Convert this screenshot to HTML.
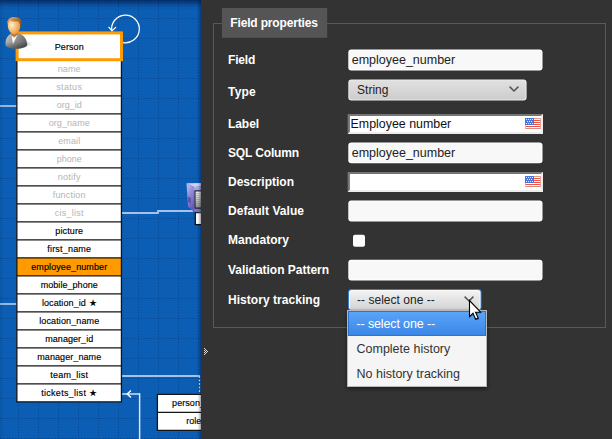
<!DOCTYPE html>
<html>
<head>
<meta charset="utf-8">
<style>
*{box-sizing:border-box;}
html,body{margin:0;padding:0;}
body{width:612px;height:439px;overflow:hidden;background:#333;font-family:"Liberation Sans",sans-serif;position:relative;}
#canvas{position:absolute;left:0;top:0;width:201px;height:439px;overflow:hidden;background-color:#0a60b6;}
#grid{position:absolute;left:0;top:0;}
#shade{position:absolute;left:0;top:0;width:201px;height:439px;box-shadow:inset 0 6px 6px -3px rgba(0,0,30,0.6), inset -3px 0 3px -2px rgba(0,0,30,0.4);}
.cls{position:absolute;left:16px;width:106px;}
.row{position:absolute;left:16.5px;width:105.5px;height:19px;border:1px solid transparent;color:#000;-webkit-text-stroke:0.15px #000;font-size:9px;text-align:center;line-height:17px;white-space:nowrap;}
.row.g{color:#b4b4b4;-webkit-text-stroke:0;}
.row.hl{}
#hdr{position:absolute;left:15.5px;top:31.5px;width:107.5px;height:29.5px;border:3px solid transparent;font-size:9px;text-align:center;line-height:24px;color:#000;-webkit-text-stroke:0.15px #000;}
#panel{position:absolute;left:201px;top:0;width:411px;height:439px;background:#333;}
#lg{position:absolute;left:222px;top:8px;width:105px;height:30px;color:#fff;font-weight:bold;font-size:12px;line-height:30px;padding-left:8.3px;letter-spacing:-0.16px;white-space:nowrap;}
.lb{position:absolute;left:228px;color:#fff;font-weight:bold;font-size:12px;white-space:nowrap;line-height:14px;}
.in{position:absolute;left:348px;width:194.5px;height:21px;font-size:12.5px;color:#222;line-height:21px;padding-left:3.7px;white-space:nowrap;}
.in2{position:absolute;left:348px;width:195px;height:20px;font-size:12.4px;color:#111;line-height:21px;padding-left:2.6px;white-space:nowrap;}
.flag{position:absolute;left:525px;}
.chev{position:absolute;}
#dd{position:absolute;left:347px;top:310px;width:140px;height:77px;background:#f5f5f5;border:1px solid #b8b8b8;box-shadow:0 2px 4px rgba(0,0,0,0.45);}
.it{position:absolute;left:0;width:138px;height:25px;font-size:12.5px;color:#333;line-height:25px;padding-left:8.5px;white-space:nowrap;}
.it.on{color:#fff;}
#hi{position:absolute;left:0;top:0;width:138px;height:25px;background:linear-gradient(#5aa6f9,#3b85e6);box-shadow:inset 0 0 0 1px #2e72cc;}
.sel{position:absolute;left:348px;height:21px;font-size:12px;color:#222;line-height:21px;padding-left:9px;letter-spacing:0.03px;white-space:nowrap;}
</style>
</head>
<body>
<div id="canvas">
<svg id="grid" width="201" height="439">
<defs>
<pattern id="fine" width="2" height="2" patternUnits="userSpaceOnUse"><rect x="0" y="0" width="2" height="1" fill="#09529f" opacity="0.2"/></pattern>
</defs>
<rect width="201" height="439" fill="url(#fine)"/>
<g stroke="#063f86" stroke-width="1" stroke-dasharray="1.7 1.3" fill="none" opacity="0.5">
<path d="M18.5 0V439M38.5 0V439M58.5 0V439M78.5 0V439M98.5 0V439M118.5 0V439M138.5 0V439M158.5 0V439M178.5 0V439M198.5 0V439"/>
<path d="M0 18.5H201M0 38.5H201M0 58.5H201M0 78.5H201M0 98.5H201M0 118.5H201M0 138.5H201M0 158.5H201M0 178.5H201M0 198.5H201M0 218.5H201M0 238.5H201M0 258.5H201M0 278.5H201M0 298.5H201M0 318.5H201M0 338.5H201M0 358.5H201M0 378.5H201M0 398.5H201M0 418.5H201M0 438.5H201"/>
</g>
<!-- connectors -->
<g fill="none" stroke="#a3c3ec" stroke-width="1.8">
<path d="M0 106H17"/>
<path d="M0 304H17"/>
<path d="M122 213H158V211H193"/>
<path d="M122 376H200"/>
<path d="M122 394H140" stroke-width="1.9"/>
</g>
<g fill="none" stroke="#dbe8f8" stroke-width="1.3">
<path d="M199.5 376V395" stroke-dasharray="2 1.5"/>
<path d="M139.6 393.2V439" stroke-width="1.5"/>
<path d="M131 390.6L127.2 394L131 397.4" stroke="#fff" stroke-width="1.4"/>
<path d="M123 42.56A13.85 13.85 0 1 0 111.8 31.2" stroke="#fff" stroke-width="1.25"/>
<path d="M108.6 26.9L112 30.8L116 27.1" stroke="#fff" stroke-width="1.25"/>
</g>
<g>
<rect x="16.85" y="59.80" width="104.60" height="342.00" fill="#fff"/>
<rect x="16.85" y="257.80" width="104.60" height="18" fill="#ff9a00"/>
<path d="M16.25 77.80H122.05M16.25 95.80H122.05M16.25 113.80H122.05M16.25 131.80H122.05M16.25 149.80H122.05M16.25 167.80H122.05M16.25 185.80H122.05M16.25 203.80H122.05M16.25 221.80H122.05M16.25 239.80H122.05M16.25 257.80H122.05M16.25 275.80H122.05M16.25 293.80H122.05M16.25 311.80H122.05M16.25 329.80H122.05M16.25 347.80H122.05M16.25 365.80H122.05M16.25 383.80H122.05M16.25 401.80H122.05M16.85 59.80V402.40M121.45 59.80V402.40" stroke="#151515" stroke-width="1.3" fill="none"/>
<rect x="17.1" y="32.9" width="104.4" height="26.8" fill="#fff" stroke="#ff9a00" stroke-width="3"/>
<rect x="157.40" y="394.30" width="60" height="36" fill="#fff"/>
<path d="M156.80 394.30H220M156.80 412.30H220M156.80 430.30H220M157.40 394.30V430.90" stroke="#151515" stroke-width="1.3" fill="none"/>
</g>
<g>
<defs>
<linearGradient id="pl" x1="0" y1="0" x2="0.4" y2="1"><stop offset="0" stop-color="#c6c2f2"/><stop offset="0.5" stop-color="#8f89da"/><stop offset="1" stop-color="#635cbc"/></linearGradient>
<linearGradient id="pf" x1="0" y1="0" x2="0" y2="1"><stop offset="0" stop-color="#b0abe8"/><stop offset="1" stop-color="#746dcc"/></linearGradient>
<linearGradient id="pt" x1="0" y1="0" x2="1" y2="1"><stop offset="0" stop-color="#cfccf4"/><stop offset="1" stop-color="#a7a2e4"/></linearGradient>
<linearGradient id="scr" x1="0" y1="0" x2="0" y2="1"><stop offset="0" stop-color="#f2f2f2"/><stop offset="0.5" stop-color="#c8c8c8"/><stop offset="1" stop-color="#8a8a8a"/></linearGradient>
</defs>
<rect x="195.3" y="212.6" width="8" height="12" fill="#fff" stroke="#111" stroke-width="1.3"/>
<path d="M186.5 183.2L201.5 183V186.6L194 186.9Z" fill="#d3d0f6"/>
<path d="M186.5 183.2L194 186.9V211.9L188 206.3Z" fill="url(#pl)"/>
<path d="M194 186.9L201.5 186.6V212.5L194 211.9Z" fill="url(#pf)"/>
<path d="M188.2 196.4L190.8 197.9V203.6L188.2 202Z" fill="#5650a8"/>
<rect x="195" y="190.9" width="7" height="17.2" fill="url(#scr)" stroke="#1a1a1a" stroke-width="1.1"/>
<path d="M195.6 193.5H201M195.6 195.5H201M195.6 197.5H201M195.6 199.5H201M195.6 201.5H201M195.6 203.5H201" stroke="#8a8a8a" stroke-width="0.6" opacity="0.7"/>
<rect x="199.6" y="210.4" width="1.4" height="1.6" fill="#2ecc40"/>
</g>
</svg>
<div class="row g" style="top:59.5px;letter-spacing:0.125px">name</div>
<div class="row g" style="top:77.5px;letter-spacing:0.333px">status</div>
<div class="row g" style="top:95.5px;letter-spacing:0.000px">org_id</div>
<div class="row g" style="top:113.5px;letter-spacing:0.062px">org_name</div>
<div class="row g" style="top:131.5px;letter-spacing:0.100px">email</div>
<div class="row g" style="top:149.5px;letter-spacing:0.000px">phone</div>
<div class="row g" style="top:167.5px;letter-spacing:0.250px">notify</div>
<div class="row g" style="top:185.5px;letter-spacing:0.188px">function</div>
<div class="row g" style="top:203.5px;letter-spacing:0.250px">cis_list</div>
<div class="row " style="top:221.5px;letter-spacing:0.143px">picture</div>
<div class="row " style="top:239.5px;letter-spacing:0.200px">first_name</div>
<div class="row hl" style="top:257.5px;letter-spacing:0.100px">employee_number</div>
<div class="row " style="top:275.5px;letter-spacing:0.042px">mobile_phone</div>
<div class="row " style="top:293.5px;letter-spacing:0.091px">location_id ★</div>
<div class="row " style="top:311.5px;letter-spacing:0.115px">location_name</div>
<div class="row " style="top:329.5px;letter-spacing:0.050px">manager_id</div>
<div class="row " style="top:347.5px;letter-spacing:0.083px">manager_name</div>
<div class="row " style="top:365.5px;letter-spacing:0.222px">team_list</div>
<div class="row " style="top:383.5px;letter-spacing:0.292px">tickets_list ★</div>
<div id="hdr" style="letter-spacing:0.08px">Person</div>
<div class="row" style="left:157px;top:393.5px;width:60px;text-align:left;padding-left:14.1px;letter-spacing:0.056px">person_id</div>
<div class="row" style="left:157px;top:411.5px;width:60px;text-align:left;padding-left:28.3px;letter-spacing:0.000px">role_id</div>
<svg id="pic" style="position:absolute;left:0;top:12px" width="36" height="42" viewBox="0 12 36 42">
<defs>
<linearGradient id="bd" x1="0" y1="0.2" x2="1" y2="0.7"><stop offset="0" stop-color="#c8c8c8"/><stop offset="0.4" stop-color="#9a9a9a"/><stop offset="1" stop-color="#585858"/></linearGradient>
<linearGradient id="bd2" x1="0" y1="0" x2="0" y2="1"><stop offset="0.55" stop-color="#000" stop-opacity="0"/><stop offset="1" stop-color="#000" stop-opacity="0.32"/></linearGradient>
<radialGradient id="fc" cx="0.32" cy="0.42" r="0.8"><stop offset="0" stop-color="#fff0d2"/><stop offset="0.35" stop-color="#f8c888"/><stop offset="0.75" stop-color="#e79f50"/><stop offset="1" stop-color="#c97a2c"/></radialGradient>
<linearGradient id="hr" x1="0" y1="0.2" x2="1" y2="0.8"><stop offset="0" stop-color="#e2b47a"/><stop offset="0.45" stop-color="#b97c3c"/><stop offset="1" stop-color="#7a481c"/></linearGradient>
<radialGradient id="sh" cx="0.5" cy="0.5" r="0.5"><stop offset="0" stop-color="#000" stop-opacity="0.22"/><stop offset="1" stop-color="#000" stop-opacity="0"/></radialGradient>
</defs>
<ellipse cx="24.5" cy="44" rx="8.5" ry="3.6" fill="url(#sh)"/>
<path d="M5.5 44.6C5.2 39.5 7.4 35.2 11.6 33.2L18.2 33C23.4 34.6 26.8 38.6 27.2 44.6C27.2 47.2 22 48.8 16.2 48.8C10.4 48.8 5.7 47.2 5.5 44.6Z" fill="url(#bd)"/>
<path d="M5.5 44.6C5.2 39.5 7.4 35.2 11.6 33.2L18.2 33C23.4 34.6 26.8 38.6 27.2 44.6C27.2 47.2 22 48.8 16.2 48.8C10.4 48.8 5.7 47.2 5.5 44.6Z" fill="url(#bd2)"/>
<path d="M11.6 35.2L17.6 34.8L12.9 44Z" fill="#fbfbfb"/>
<path d="M10.9 31L17.6 31L17.9 34.4L14.2 37.4L11 35Z" fill="#c77a30"/>
<path d="M7.8 25.5C7.6 21 10 18.4 14.2 18.4C18.4 18.4 20.6 21.2 20.4 25.8C20.2 30.4 17.6 34.2 14.4 34.2C11.2 34.2 8 30.4 7.8 25.5Z" fill="url(#fc)"/>
<path d="M7.3 24.2C6.8 19.6 10 16.9 14.6 17C19.6 17.1 22.3 19.8 21.6 24.4C21.4 26 21 27.2 20.4 28C20.4 25 19.8 22.8 18.2 21.2C15.4 21.8 11.2 21 9.2 20.4C8.2 21.6 7.8 23 7.3 24.2Z" fill="url(#hr)"/>
</svg>
<div id="shade"></div>
</div>

<div id="panel"></div>
<svg id="boxes" style="position:absolute;left:0;top:0" width="612" height="439">
<defs>
<linearGradient id="sg" x1="0" y1="0" x2="0" y2="1"><stop offset="0" stop-color="#e0e0e0"/><stop offset="1" stop-color="#cdcdcd"/></linearGradient>
<linearGradient id="sg2" x1="0" y1="0" x2="0" y2="1"><stop offset="0" stop-color="#f2f2f2"/><stop offset="1" stop-color="#d3d3d3"/></linearGradient>
</defs>
<rect x="213.5" y="23.5" width="392" height="304" fill="none" stroke="#595959" stroke-width="1"/>
<rect x="221.9" y="7.9" width="105.3" height="29.9" fill="#555"/>
<rect x="348.3" y="49.60" width="194.2" height="20.90" rx="3" fill="#fff"/><rect x="349.3" y="50.60" width="192.2" height="18.90" rx="2.2" fill="#f8f8f8"/>
<rect x="348.3" y="79.6" width="178.3" height="20.9" rx="3.2" fill="#ececec"/>
<rect x="349.3" y="80.6" width="176.3" height="18.9" rx="2.4" fill="url(#sg)"/>
<rect x="347.90" y="114.10" width="195.10" height="19.90" fill="#fff"/><path d="M347.90 114.10H543.00L541.00 116.10H349.90V132.00L347.90 134.00Z" fill="#757575"/><path d="M543.00 114.10V134.00H347.90L349.90 132.00H541.00V116.10Z" fill="#ececec"/><rect x="348.3" y="142.40" width="194.2" height="20.90" rx="3" fill="#fff"/><rect x="349.3" y="143.40" width="192.2" height="18.90" rx="2.2" fill="#f8f8f8"/><rect x="347.90" y="172.00" width="195.10" height="19.90" fill="#fff"/><path d="M347.90 172.00H543.00L541.00 174.00H349.90V189.90L347.90 191.90Z" fill="#757575"/><path d="M543.00 172.00V191.90H347.90L349.90 189.90H541.00V174.00Z" fill="#ececec"/><rect x="348.3" y="200.60" width="194.2" height="21.00" rx="3" fill="#fff"/><rect x="349.3" y="201.60" width="192.2" height="19.00" rx="2.2" fill="#f8f8f8"/>
<rect x="353" y="234.8" width="12" height="12" rx="2" fill="#fdfdfd"/>
<rect x="348.3" y="259.70" width="194.2" height="20.70" rx="3" fill="#fff"/><rect x="349.3" y="260.70" width="192.2" height="18.70" rx="2.2" fill="#f8f8f8"/>
<rect x="348" y="289" width="133.6" height="21.6" rx="3.4" fill="#2f7fd9"/>
<rect x="349" y="290" width="131.6" height="19.6" rx="2.6" fill="#fafafa"/>
<rect x="350" y="291" width="129.6" height="18.6" rx="2" fill="url(#sg2)"/>
</svg>
<div id="lg">Field properties</div>

<div class="lb" style="top:53px;letter-spacing:-0.197px">Field</div>
<div class="lb" style="top:85px;letter-spacing:0.223px">Type</div>
<div class="lb" style="top:117px;letter-spacing:-0.066px">Label</div>
<div class="lb" style="top:146px;letter-spacing:-0.142px">SQL Column</div>
<div class="lb" style="top:175px;letter-spacing:0.000px">Description</div>
<div class="lb" style="top:204px;letter-spacing:0.050px">Default Value</div>
<div class="lb" style="top:233px;letter-spacing:0.036px">Mandatory</div>
<div class="lb" style="top:263px;letter-spacing:-0.018px">Validation Pattern</div>
<div class="lb" style="top:293px;letter-spacing:0.041px">History tracking</div>

<div class="in" style="top:49.5px">employee_number</div>
<div class="sel" style="top:79.5px;width:178.5px">String</div>
<div class="in2" style="top:114px">Employee number</div>
<div class="in" style="top:142.5px">employee_number</div>
<div class="in2" style="top:172px"></div>
<div class="in" style="top:201px"></div>
<div class="in" style="top:259.5px"></div>
<div class="sel" style="top:289.5px;width:134px">-- select one --</div>
<svg class="flag" style="top:118px" width="16" height="11" viewBox="0 0 16 11" shape-rendering="crispEdges">
<rect width="16" height="11" fill="#fff"/>
<g fill="#e9544c"><rect y="0" width="16" height="1" fill="#e59a88"/><rect y="2" width="16" height="1"/><rect y="4" width="16" height="1"/><rect y="6" width="16" height="1"/><rect y="8" width="16" height="1"/><rect y="10" width="16" height="1" fill="#dc8c78"/></g>
<rect x="0" y="0" width="1" height="11" fill="#e8b0a4" opacity="0.8"/><rect x="15" y="0" width="1" height="11" fill="#d8a494" opacity="0.8"/>
<rect x="0" y="0" width="9" height="7" fill="#4a74d6"/>
<g fill="#e8eefc"><rect x="1" y="1" width="1" height="1"/><rect x="3" y="1" width="1" height="1"/><rect x="5" y="1" width="1" height="1"/><rect x="7" y="1" width="1" height="1"/><rect x="2" y="3" width="1" height="1"/><rect x="4" y="3" width="1" height="1"/><rect x="6" y="3" width="1" height="1"/><rect x="1" y="5" width="1" height="1"/><rect x="3" y="5" width="1" height="1"/><rect x="5" y="5" width="1" height="1"/><rect x="7" y="5" width="1" height="1"/></g>
</svg>
<svg class="flag" style="top:176px" width="16" height="11" viewBox="0 0 16 11" shape-rendering="crispEdges">
<rect width="16" height="11" fill="#fff"/>
<g fill="#e9544c"><rect y="0" width="16" height="1" fill="#e59a88"/><rect y="2" width="16" height="1"/><rect y="4" width="16" height="1"/><rect y="6" width="16" height="1"/><rect y="8" width="16" height="1"/><rect y="10" width="16" height="1" fill="#dc8c78"/></g>
<rect x="0" y="0" width="1" height="11" fill="#e8b0a4" opacity="0.8"/><rect x="15" y="0" width="1" height="11" fill="#d8a494" opacity="0.8"/>
<rect x="0" y="0" width="9" height="7" fill="#4a74d6"/>
<g fill="#e8eefc"><rect x="1" y="1" width="1" height="1"/><rect x="3" y="1" width="1" height="1"/><rect x="5" y="1" width="1" height="1"/><rect x="7" y="1" width="1" height="1"/><rect x="2" y="3" width="1" height="1"/><rect x="4" y="3" width="1" height="1"/><rect x="6" y="3" width="1" height="1"/><rect x="1" y="5" width="1" height="1"/><rect x="3" y="5" width="1" height="1"/><rect x="5" y="5" width="1" height="1"/><rect x="7" y="5" width="1" height="1"/></g>
</svg>
<svg class="chev" style="left:508px;top:85px" width="12" height="8" viewBox="0 0 12 8"><path d="M1.6 1.6L6 6L10.4 1.6" fill="none" stroke="#555" stroke-width="1.5"/></svg>
<svg class="chev" style="left:463px;top:295px" width="12" height="8" viewBox="0 0 12 8"><path d="M1.6 1.6L6 6L10.4 1.6" fill="none" stroke="#555" stroke-width="1.5"/></svg>
<div id="dd">
<div id="hi"></div>
<div class="it on" style="top:1px;letter-spacing:-0.13px">-- select one --</div>
<div class="it" style="top:26px">Complete history</div>
<div class="it" style="top:51.3px">No history tracking</div>
</div>
<svg style="position:absolute;left:467px;top:298px" width="18" height="26" viewBox="-2 -2 18 26">
<path d="M0.5 0.5V16.6L4 13.2L6.6 19.2L9.2 18.1L6.6 12.2H11.6Z" fill="#000" opacity="0.25" transform="translate(1,1.2)"/>
<path d="M0.5 0.5V16.6L4 13.2L6.6 19.2L9.2 18.1L6.6 12.2H11.6Z" fill="#fff" stroke="#000" stroke-width="1.1" stroke-linejoin="miter"/>
</svg>
<svg style="position:absolute;left:204px;top:348px" width="4" height="7" viewBox="0 0 4 7" shape-rendering="crispEdges"><g fill="#ddd"><rect x="0" y="0" width="1" height="1"/><rect x="1" y="1" width="1" height="1"/><rect x="0" y="2" width="1" height="1"/><rect x="2" y="2" width="1" height="1"/><rect x="1" y="3" width="1" height="1"/><rect x="3" y="3" width="1" height="1"/><rect x="0" y="4" width="1" height="1"/><rect x="2" y="4" width="1" height="1"/><rect x="1" y="5" width="1" height="1"/><rect x="0" y="6" width="1" height="1"/></g></svg>

</body>
</html>
